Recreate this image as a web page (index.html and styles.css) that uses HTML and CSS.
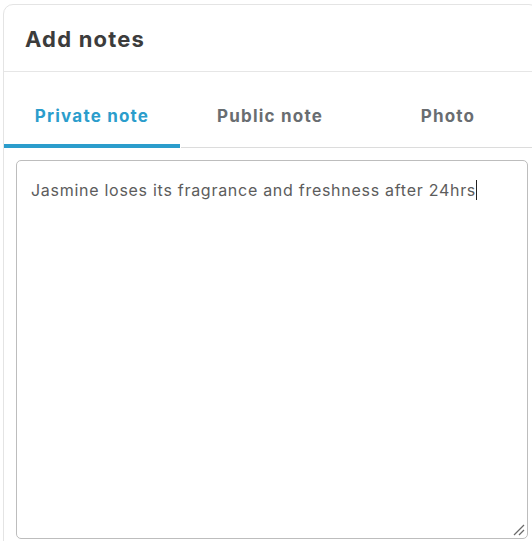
FILE: index.html
```html
<!DOCTYPE html>
<html lang="en">
<head>
<meta charset="utf-8">
<title>Add notes</title>
<link rel="stylesheet" href="styles.css">
</head>
<body>
<div class="card">
  <div class="card-header">
    <h1 class="title">Add notes</h1>
  </div>
  <div class="tabs">
    <div class="tab active">Private note</div>
    <div class="tab">Public note</div>
    <div class="tab">Photo</div>
  </div>
  <div class="body">
    <div class="note-field">
      <span class="note-text">Jasmine loses its fragrance and freshness after 24hrs</span><span class="caret"></span>
      <svg class="resize" width="12" height="12" viewBox="0 0 12 12">
        <line x1="1" y1="11" x2="11" y2="1" stroke="#6a6a6a" stroke-width="1.2"/>
        <line x1="6" y1="11" x2="11" y2="6" stroke="#6a6a6a" stroke-width="1.2"/>
      </svg>
    </div>
  </div>
</div>
</body>
</html>
```
FILE: styles.css
```css
html, body {
  margin: 0;
  padding: 0;
  background: #ffffff;
  overflow: hidden;
}
body {
  width: 532px;
  height: 541px;
  font-family: Inter, "Noto Sans", sans-serif;
}
.card {
  margin: 4px 0 0 3px;
  width: 536px;
  height: 560px;
  border: 1px solid #e4e4e4;
  border-radius: 10px;
  box-sizing: border-box;
  background: #fff;
}
.card-header {
  height: 67px;
  box-sizing: border-box;
  border-bottom: 1px solid #e6e6e6;
  display: flex;
  align-items: center;
  padding: 2px 0 0 21px;
}
.title {
  margin: 0;
  font-size: 22px;
  font-weight: 700;
  color: #3c3c3c;
  letter-spacing: 1.2px;
}
.tabs {
  display: flex;
  height: 76px;
}
.tab {
  width: 178px;
  flex: none;
  display: flex;
  align-items: center;
  justify-content: center;
  padding-top: 12px;
  box-sizing: border-box;
  font-size: 17px;
  font-weight: 700;
  letter-spacing: 1.2px;
  color: #696d71;
  box-shadow: inset 0 -1px #dcdcdc;
}
.tab.active {
  width: 176px;
  margin-right: 1px;
  color: #2b9dcc;
  box-shadow: inset 0 -4px #2b9dcc;
}
.body {
  padding: 12px 0 0 12px;
}
.note-field {
  position: relative;
  width: 512px;
  height: 379px;
  box-sizing: border-box;
  border: 1px solid #bdbdbd;
  border-radius: 5px;
  padding: 19px 14px;
  font-size: 16px;
  line-height: 20px;
  letter-spacing: 0.72px;
  color: #5c5c5c;
}
.caret {
  display: inline-block;
  width: 1px;
  height: 20px;
  background: #222;
  vertical-align: top;
}
.resize {
  position: absolute;
  right: 2px;
  bottom: 2px;
}
```
